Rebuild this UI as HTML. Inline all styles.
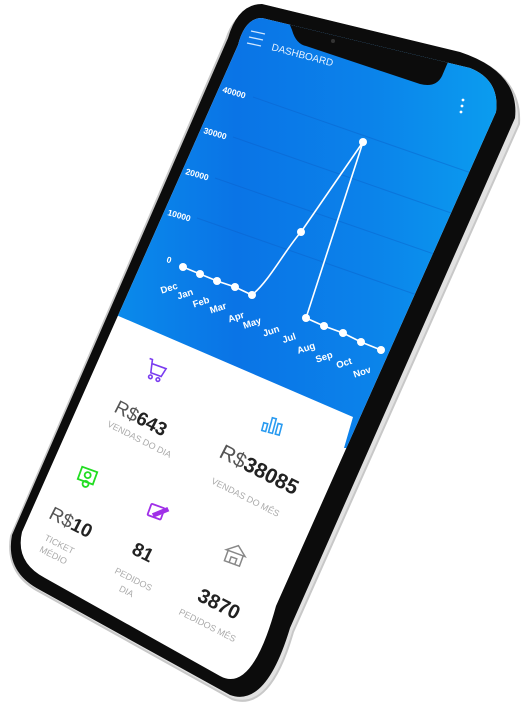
<!DOCTYPE html>
<html><head><meta charset="utf-8"><style>
html,body{margin:0;padding:0;background:#fff;width:524px;height:712px;overflow:hidden}
svg{display:block}
text{font-family:"Liberation Sans",sans-serif}
</style></head><body>
<svg width="524" height="712" viewBox="0 0 524 712" xmlns="http://www.w3.org/2000/svg">
<defs>
<linearGradient id="bg" x1="0" y1="0" x2="1" y2="0">
<stop offset="0" stop-color="#0aa0f0"/><stop offset="0.45" stop-color="#0a74e6"/><stop offset="0.7" stop-color="#0b82ea"/><stop offset="1" stop-color="#0ba2f0"/>
</linearGradient>
<clipPath id="scr"><path d="M262,18 L470,68 Q500,80 496,112 L276,606 Q252,694 220,676 L45,578 Q15,562 22,532 L238,45 Q245,18 262,18 Z"/></clipPath>
</defs>
<!-- side silver -->
<path d="M266,6 L462,54 Q522,74 519,124 L293,632 Q270,712 232,699 L40,592 Q5,574 11,536 L226,40 Q236,8 266,6 Z" fill="#e2e2e2" stroke="#c8c8c8" stroke-width="2"/>
<!-- black body -->
<path d="M262,4 L460,52 Q520,72 515,118 L290,628 Q266,708 230,695 L40,590 Q5,572 12,535 L228,38 Q238,4 262,4 Z" fill="#0c0c0c"/>
<g clip-path="url(#scr)">
<rect x="0" y="0" width="524" height="712" fill="#fff"/>
<path d="M0,0 L524,0 L524,420 L362,420 L350,448 L344,448 L353,417 L100,308 L0,265 Z" fill="url(#bg)"/>
<!-- grid -->
<g stroke="#0a5fc8" stroke-opacity="0.45" stroke-width="1">
<line x1="253" y1="97" x2="520" y2="190"/>
<line x1="233" y1="137" x2="500" y2="230"/>
<line x1="215" y1="178" x2="480" y2="270"/>
<line x1="197" y1="218" x2="460" y2="310"/>
</g>
<!-- y labels -->
<g fill="#fff" font-size="8.5" font-weight="bold">
<text x="222" y="92" transform="rotate(16 222 92)">40000</text>
<text x="203" y="133" transform="rotate(16 203 133)">30000</text>
<text x="185" y="174" transform="rotate(16 185 174)">20000</text>
<text x="167" y="215" transform="rotate(16 167 215)">10000</text>
<text x="166" y="262" transform="rotate(16 166 262)">0</text>
</g>
<!-- line -->
<path d="M183,267 L200,274 L217,281 L235,287 L252,295 C270,280 285,250 301,232 L363,142 L306,318 L324,326 L343,333 L361,342 L381,350" fill="none" stroke="#fff" stroke-width="1.6"/>
<g fill="#fff">
<circle cx="183" cy="267" r="4"/><circle cx="200" cy="274" r="4"/><circle cx="217" cy="281" r="4"/><circle cx="235" cy="287" r="4"/><circle cx="252" cy="295" r="4"/><circle cx="301" cy="232" r="4"/><circle cx="363" cy="142" r="4"/><circle cx="306" cy="318" r="4"/><circle cx="324" cy="326" r="4"/><circle cx="343" cy="333" r="4"/><circle cx="361" cy="342" r="4"/><circle cx="381" cy="350" r="4"/>
</g>
<g fill="#fff" font-size="9.5" font-weight="bold" text-anchor="middle">
<text transform="translate(170,291) rotate(-18)">Dec</text>
<text transform="translate(186,297) rotate(-18)">Jan</text>
<text transform="translate(202,305) rotate(-18)">Feb</text>
<text transform="translate(219,311) rotate(-18)">Mar</text>
<text transform="translate(237,320) rotate(-18)">Apr</text>
<text transform="translate(253,326) rotate(-18)">May</text>
<text transform="translate(272,334) rotate(-18)">Jun</text>
<text transform="translate(290,341) rotate(-18)">Jul</text>
<text transform="translate(307,351) rotate(-18)">Aug</text>
<text transform="translate(325,360) rotate(-18)">Sep</text>
<text transform="translate(345,366) rotate(-18)">Oct</text>
<text transform="translate(363,375) rotate(-18)">Nov</text>
</g>
<!-- header -->
<g stroke="#cfe6ff" stroke-width="1.3">
<line x1="251" y1="31" x2="265" y2="34"/><line x1="249" y1="37" x2="263" y2="40"/><line x1="247" y1="43" x2="261" y2="46"/>
</g>
<text transform="translate(271,50) rotate(15)" fill="#e6f2ff" font-size="10">DASHBOARD</text>
<g fill="#fff"><circle cx="463" cy="100" r="1.4"/><circle cx="462" cy="106" r="1.4"/><circle cx="461" cy="112" r="1.4"/></g>
<!-- notch -->
<path d="M288,20 L292,30 Q296,44 306,46 L420,84 Q436,88 442,76 L448,62 L470,60 L300,10 Z" fill="#0c0c0c"/>
<circle cx="333" cy="41" r="2" fill="#333"/>
<!-- panel icons -->
<g fill="none" stroke="#7a3cf0" stroke-width="1.6" transform="translate(155,370) rotate(20)">
<path d="M-9,-9 L-6,-9 L-3,4 L8,4 L10,-5 L-5,-5"/><circle cx="-2" cy="8" r="1.8"/><circle cx="6" cy="8" r="1.8"/>
</g>
<g fill="none" stroke="#2a9bf0" stroke-width="1.6" transform="translate(272,427) rotate(15)">
<rect x="-9" y="-2" width="4" height="8"/><rect x="-2" y="-9" width="4" height="15"/><rect x="5" y="-5" width="4" height="11"/>
</g>
<g fill="none" stroke="#22dd22" stroke-width="1.8" transform="translate(87,477) rotate(20)">
<rect x="-8" y="-8" width="16" height="13"/><circle cx="0" cy="-2" r="3"/><circle cx="1" cy="7" r="3"/>
</g>
<g fill="none" stroke="#a030e8" stroke-width="1.8" transform="translate(157,512) rotate(20)">
<rect x="-8" y="-6" width="14" height="12" rx="1"/><path d="M-3,3 L8,-7 L10,-5 L-1,5 Z" fill="#a030e8"/>
</g>
<g fill="none" stroke="#888" stroke-width="1.5" transform="translate(235,555) rotate(20)">
<path d="M-8,-2 L-8,9 L8,9 L8,-2 M-10,-2 L0,-10 L10,-2 Z M-3,9 L-3,3 L3,3 L3,9"/>
</g>
<!-- panel texts -->
<g font-size="19" font-weight="bold" fill="#222" text-anchor="middle">
<text transform="translate(138,424) rotate(27)"><tspan font-weight="normal" fill="#555">R$</tspan>643</text>
<text transform="translate(256,476) rotate(27)" font-size="21"><tspan font-weight="normal" fill="#555">R$</tspan>38085</text>
<text transform="translate(68,528) rotate(27)"><tspan font-weight="normal" fill="#555">R$</tspan>10</text>
<text transform="translate(140,558) rotate(27)">81</text>
<text transform="translate(216,610) rotate(27)" font-size="20">3870</text>
</g>
<g font-size="9" fill="#aaa" text-anchor="middle">
<text transform="translate(138,442) rotate(27)">VENDAS DO DIA</text>
<text transform="translate(244,500) rotate(27)">VENDAS DO MÊS</text>
<text transform="translate(58,547) rotate(27)">TICKET</text>
<text transform="translate(52,558) rotate(27)">MÉDIO</text>
<text transform="translate(132,582) rotate(27)">PEDIDOS</text>
<text transform="translate(125,594) rotate(27)">DIA</text>
<text transform="translate(206,628) rotate(27)">PEDIDOS MÊS</text>
</g>
</g>
</svg>
</body></html>
